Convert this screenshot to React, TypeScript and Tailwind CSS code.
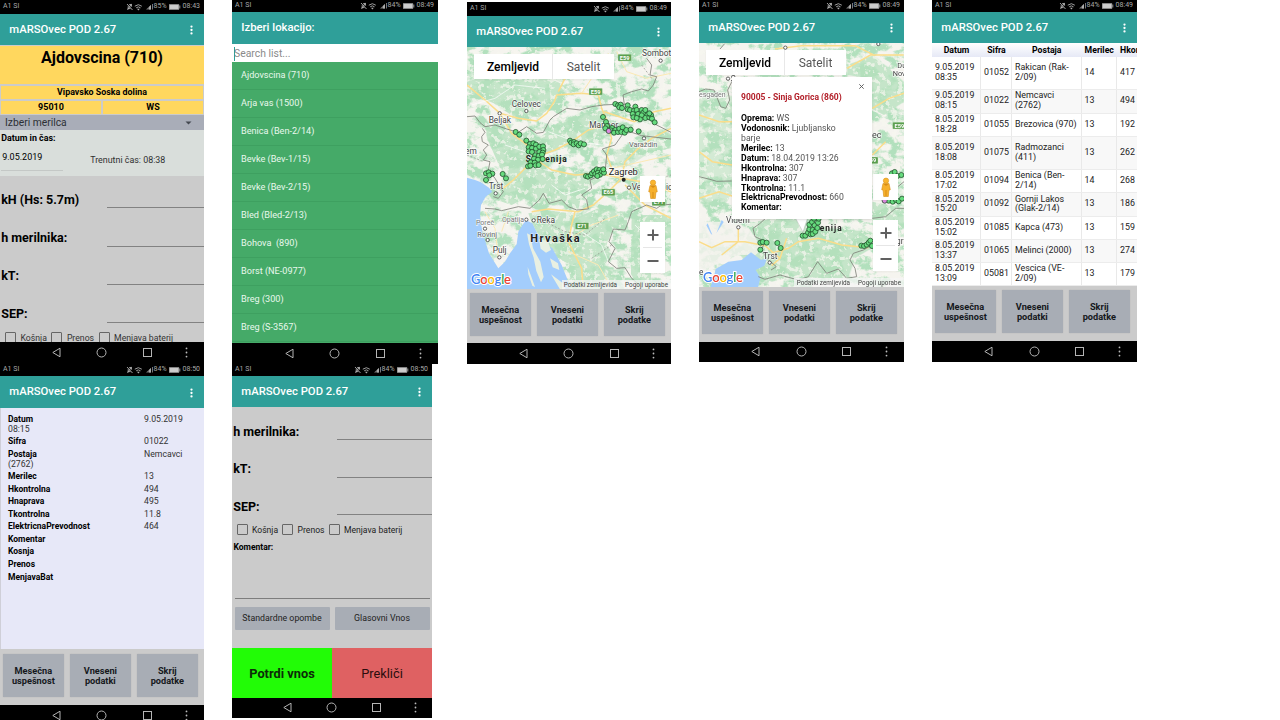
import React from 'react';

type Pt = [number, number];

/* ---------- system chrome ---------- */

function StatusBar({ time, battery, className }: { time: string; battery: string; className: string }) {
  return (
    <div className={`flex shrink-0 items-center bg-black pr-[4px] pb-px pl-[3px] text-[7px] leading-none whitespace-nowrap text-[#a9a9a9] ${className}`}>
      <span>A1 SI</span>
      <svg className="ml-auto h-[8px] w-[17px]" viewBox="0 0 17 8" fill="none" stroke="#b0b0b0" strokeWidth="0.9">
        <path d="M1 1l5.5 6M1.5 5.6h3M2.2 5.4V3.2M3 1.8l2.4-.5.2 2.4M5.5 1l-4 6" />
        <path d="M8.8 3.2q3.6-3 7 0M10.2 4.8q2.2-1.8 4.3 0" />
        <path d="M11 5.8h2.8L12.4 7.4z" fill="#b0b0b0" stroke="none" />
      </svg>
      <svg className="ml-[3.5px] h-[7px] w-[7px]" viewBox="0 0 7 7">
        <path d="M0 6.5L5 2v4.5z" fill="#777" />
        <path d="M3 6.5V4l2-2v4.500zM6 1h.7v5.500H6z" fill="#aaa" />
      </svg>
      <span className="ml-[0.5px]">{battery}</span>
      <svg className="ml-[2px] h-[6px] w-[12px]" viewBox="0 0 12 6">
        <rect x="0.4" y="0.7" width="9.4" height="4.600" fill="#ccc" stroke="#aaa" strokeWidth="0.7" />
        <path d="M10.800 1.500v3" stroke="#aaa" strokeWidth="0.9" />
      </svg>
      <span className="ml-[2px]">{time}</span>
    </div>
  );
}

function Header({ title = 'mARSOvec POD 2.67', menu = true, className = 'h-[31px]' }: { title?: string; menu?: boolean; className?: string }) {
  return (
    <div className={`flex shrink-0 items-center justify-between bg-[#2f9f99] pt-px pr-[11px] pl-[9.3px] text-[11.3px] font-medium whitespace-nowrap text-white ${className}`}>
      <span>{title}</span>
      {menu && (
        <svg className="h-[10px] w-[3px]" viewBox="0 0 3 10" fill="#fff">
          <circle cx="1.5" cy="1.6" r="1.150" />
          <circle cx="1.5" cy="5" r="1.150" />
          <circle cx="1.5" cy="8.400" r="1.150" />
        </svg>
      )}
    </div>
  );
}

function NavBar({ className = 'h-[21px]' }: { className?: string }) {
  return (
    <div className={`grid shrink-0 grid-cols-[34fr_45fr_45.5fr_45fr_34.5fr] place-items-center bg-black pb-px ${className}`}>
      <span />
      <svg className="h-[11px] w-[11px]" viewBox="0 0 11 11" fill="none" stroke="#b5b5b5" strokeWidth="1">
        <path d="M9 1.200v8.600L1.800 5.500z" strokeLinejoin="round" />
      </svg>
      <svg className="h-[11px] w-[11px]" viewBox="0 0 11 11" fill="none" stroke="#b5b5b5" strokeWidth="1">
        <circle cx="5.500" cy="5.500" r="4.500" />
      </svg>
      <svg className="h-[11px] w-[11px]" viewBox="0 0 11 11" fill="none" stroke="#b5b5b5" strokeWidth="1">
        <rect x="1.500" y="1.500" width="8" height="8" />
      </svg>
      <svg className="h-[11px] w-[3px]" viewBox="0 0 3 11" fill="#bbb">
        <circle cx="1.5" cy="1.400" r="0.900" />
        <circle cx="1.5" cy="5.500" r="0.900" />
        <circle cx="1.5" cy="9.600" r="0.900" />
      </svg>
    </div>
  );
}

function BottomButtons({ className }: { className: string }) {
  const cell = 'flex h-[43px] w-[61.500px] items-center justify-center rounded-[1px] bg-[#a8adb5] pt-px text-center shadow-[0_0_1px_#999]';
  return (
    <div className={`flex shrink-0 gap-[5.500px] bg-[#cbcbcb] pl-[2.600px] text-[9.200px] leading-[10.500px] font-bold text-[#15181c] ${className}`}>
      <div className={cell}>Mesečna<br />uspešnost</div>
      <div className={cell}>Vneseni<br />podatki</div>
      <div className={cell}>Skrij<br />podatke</div>
    </div>
  );
}

function Check({ label, className = '' }: { label: string; className?: string }) {
  return (
    <span className={`flex items-center gap-[4.500px] ${className}`}>
      <span className="h-[11px] w-[11px] rounded-[1px] border border-[#666]" />
      <span className="pt-px">{label}</span>
    </span>
  );
}

function Field({ label, className }: { label: string; className: string }) {
  return (
    <div className={`flex shrink-0 items-end justify-between pl-[1.200px] text-[12.500px] leading-[15px] font-bold ${className}`}>
      <span className="mb-[1.500px]">{label}</span>
      <span className="h-px w-[97px] bg-[#828282]" />
    </div>
  );
}

/* ---------- maps ---------- */

function Terrain({ id, x, y, w, h, seed }: { id: string; x: number; y: number; w: number; h: number; seed: number }) {
  return (
    <>
      <defs>
        <filter id={id} x="0" y="0" width="100%" height="100%" colorInterpolationFilters="sRGB">
          <feTurbulence type="fractalNoise" baseFrequency="0.022 0.03" numOctaves={5} seed={seed} />
          <feColorMatrix values="0 0 0 0 0.7  0 0 0 0 0.88  0 0 0 0 0.74  6 0 0 0 -2.7" />
        </filter>
        <filter id={`${id}g`} x="0" y="0" width="100%" height="100%" colorInterpolationFilters="sRGB">
          <feTurbulence type="fractalNoise" baseFrequency="0.06" numOctaves={4} seed={seed + 4} />
          <feColorMatrix values="0 0 0 0 0.97  0 0 0 0 0.97  0 0 0 0 0.94  0 9 0 0 -5" />
        </filter>
      </defs>
      <rect x={x} y={y} width={w} height={h} fill="#f5f4ef" />
      <rect x={x} y={y} width={w} height={h} filter={`url(#${id})`} />
    </>
  );
}

function Clearings({ id, x, y, w, h }: { id: string; x: number; y: number; w: number; h: number }) {
  return <rect x={x} y={y} width={w} height={h} filter={`url(#${id}g)`} opacity="0.7" />;
}

function Dots({ pts, fill = '#66db7e' }: { pts: Pt[]; fill?: string }) {
  return (
    <g fill={fill} stroke="#1f4a29" strokeWidth="2.300">
      {pts.map(([x, y], i) => (
        <circle key={i} cx={x} cy={y} r="7.600" />
      ))}
    </g>
  );
}

function Shield({ x, y, t }: { x: number; y: number; t: string }) {
  return (
    <g>
      <rect x={x - 20} y={y - 10} width="40" height="20" rx="2" fill="#5a9e4e" stroke="#d5ecd1" strokeWidth="1" />
      <text x={x} y={y + 6} fontSize="17" fontWeight="700" fill="#fff" textAnchor="middle">{t}</text>
    </g>
  );
}

function Place({ x, y, t, cx, cy, size = 25, fill = '#444' }: { x: number; y: number; t: string; cx?: number; cy?: number; size?: number; fill?: string }) {
  return (
    <g>
      {cx !== undefined && <circle cx={cx} cy={cy} r="5" fill="#fff" stroke="#444" strokeWidth="2.500" />}
      <text x={x} y={y} fontSize={size} fill={fill} stroke="#fff" strokeWidth="4" paintOrder="stroke" strokeOpacity="0.8">{t}</text>
    </g>
  );
}

function MapFooter({ y, right }: { y: number; right: number }) {
  return (
    <g>
      <rect x="306" y={y - 27} width={right - 306} height="27" fill="#f5f5f5" opacity="0.75" />
      <text x={right - 322} y={y - 7} fontSize="19" fill="#444" textLength="160">Podatki zemljevida</text>
      <text x={right - 138} y={y - 7} fontSize="19" fill="#444" textLength="129">Pogoji uporabe</text>
      <text x="33" y={y - 14} fontSize="39" fontWeight="600" fontFamily="Lato, sans-serif" stroke="#fff" strokeWidth="6" paintOrder="stroke" textLength="120">
        <tspan fill="#4285f4">G</tspan><tspan fill="#ea4335">o</tspan><tspan fill="#fbbc05">o</tspan><tspan fill="#4285f4">g</tspan><tspan fill="#34a853">l</tspan><tspan fill="#ea4335">e</tspan>
      </text>
    </g>
  );
}

function MapControls({ top, tabTop }: { top: string; tabTop: string }) {
  return (
    <>
      <div className={`absolute left-[7px] flex h-[25px] w-[140px] bg-white text-[12px] shadow-xs ${tabTop}`}>
        <span className="flex w-[79px] items-center justify-center border-r border-[#e8e8e8] font-medium text-black">Zemljevid</span>
        <span className="flex flex-1 items-center justify-center text-[#565656]">Satelit</span>
      </div>
      <div className={`absolute right-[6px] flex w-[25px] flex-col ${top}`}>
        <div className="flex h-[26px] items-center justify-center bg-white shadow-xs">
          <svg className="h-[21px] w-[14px]" viewBox="0 0 14 21">
            <path d="M4 6.500h6l1.300 6.200-1.400.5-.6 6.300H4.700l-.6-6.300-1.400-.5z" fill="#f6b02c" stroke="#d58d14" strokeWidth="0.600" />
            <path d="M7 13v6" stroke="#c77f10" strokeWidth="0.700" />
            <circle cx="7" cy="3.700" r="2.700" fill="#f9b52f" stroke="#d58d14" strokeWidth="0.500" />
            <path d="M4.500 7h5L7 9z" fill="#d98c14" />
          </svg>
        </div>
        <div className="mt-[20px] flex h-[51px] flex-col bg-white shadow-xs">
          <span className="flex flex-1 items-center justify-center">
            <svg className="h-[12px] w-[12px]" viewBox="0 0 12 12" stroke="#606060" strokeWidth="2"><path d="M0.500 6h11M6 0.500v11" /></svg>
          </span>
          <span className="mx-[3px] h-px bg-[#e6e6e6]" />
          <span className="flex flex-1 items-center justify-center">
            <svg className="h-[12px] w-[12px]" viewBox="0 0 12 12" stroke="#606060" strokeWidth="2"><path d="M0.500 6h11" /></svg>
          </span>
        </div>
      </div>
    </>
  );
}

const eastDots: Pt[] = [
  [466, 312], [474, 316], [482, 314], [478, 322], [486, 324], [503, 316], [503, 328], [510, 330], [526, 320], [522, 332], [530, 330], [518, 342], [534, 342], [520, 352],
  [545, 330], [550, 338], [545, 346], [556, 330], [562, 345], [556, 354], [568, 352], [573, 345], [576, 356], [540, 358], [530, 354], [584, 367], [568, 340],
  [429, 351], [438, 366], [441, 378], [436, 385], [456, 384], [452, 391], [466, 390], [462, 398], [474, 396], [478, 386], [488, 382], [484, 396], [494, 398], [499, 390], [512, 389], [536, 394],
];
const midDots: Pt[] = [
  [167, 396], [178, 404], [199, 422], [330, 422], [334, 428], [342, 426], [341, 433], [350, 430], [356, 436], [362, 430], [372, 433],
  [210, 432], [220, 430], [228, 434], [206, 442], [216, 444], [228, 446], [238, 440], [249, 439], [250, 450], [206, 454], [216, 456], [238, 456], [248, 458],
  [226, 466], [236, 468], [246, 464], [222, 476], [234, 479], [248, 477], [212, 487], [224, 488], [204, 499], [211, 497], [227, 496], [236, 495],
];
const southDots: Pt[] = [
  [78, 520], [86, 517], [97, 521], [88, 526], [78, 540], [128, 522], [138, 535],
  [378, 528], [384, 530], [392, 526], [396, 520], [402, 514], [410, 508], [418, 510], [406, 522], [414, 518], [420, 524], [426, 514], [432, 518], [430, 508], [412, 528],
];

function BigMap() {
  return (
    <svg className="h-full w-full" viewBox="21 141 612 726" preserveAspectRatio="none" fontFamily="Roboto, sans-serif">
      <Terrain id="terrA" x={21} y={141} w={612} h={726} seed={11} />
      <g transform="translate(15 135)">
        <g fill="#b5e1bd" opacity="0.75">
          <path d="M6 110l60-20 90 15 90-10 60 30-30 40-50 50-80 0-60-40-80-35z" />
          <path d="M6 225l60 20 60 10 60 10 30 20 60-50 70-30 80-10 20 50-50 30-70 25-90 30-60 60-70-20-40-90-6-40z" />
          <path d="M110 355l80 10 90 20 90 0 40 20-60 40-10 50-60-20-50 10-40-30-50 25-60-20 30-50z" />
          <path d="M190 505l70-8 70 10-20 60 30 40 40 60 10 66h-60l-30-80-60-50-40-70z" />
          <path d="M330 520l70-30 80 10 10 50-50 10-15 40 15 20-20 40 30 30-10 48h-70l-20-80-30-60z" />
          <path d="M500 510l118 0v90l-60 0v138h-30l-30-50 0-80z" />
          <path d="M440 320l50-20 40-40 80-10 8 60-60 10-60 40-40 10z" opacity="0.6" />
        </g>
      </g>
      <Clearings id="terrA" x={21} y={141} w={612} h={726} />
      <g transform="translate(15 135)">
        <path d="M6 398L30 405 48 412 72 428 82 440 62 455 48 480 45 510 52 560 72 625 100 670 120 650 135 625 155 598 160 560 182 525 202 535 215 562 232 590 262 610 290 660 306 700 315 738H6z" fill="#a3cdfc" />
        <path d="M186 565l10 5 8 40 22 40 10 46-8 16-14-34-8-40-14-40zM222 582l26 6 10 27-15 8-16-12zM255 640l24 15 4 20-20-8zM188 666l10 26 12 34-8-4-12-34zM258 688l36 27 10 23h-16z" fill="#e9f0e2" />
        <g fill="none" stroke="#fbdd8b" strokeWidth="4.500" strokeLinejoin="round">
          <path d="M6 120l54 45 45 40 55 15 55 8 30-23 23-35 7-20 75-5 50 5 10 40 15 35-5 15-50 15-50 35-50 25-55 20-25 25-45 45-30 25" />
          <path d="M105 205l35 60 60 45 15 35 45 30 70 15 70-5 70 15" />
          <path d="M425 240l15 40-15 50 15 40 30 30-40 40-45 40-45 20-90-8-50 8" />
          <path d="M470 400l60 10 88 30M470 400l10-50 40-40 40-30 58-30M330 500l-10 40-10 50 15 30 25 50 5 68" />
          <path d="M280 140l30-60 40-20 70-20M418 200l90 30 60-30 50-10M480 420l60 60 78 40" />
        </g>
        <g fill="none" stroke="#fce9b4" strokeWidth="3">
          <path d="M350 145l40-60 40-60M455 20l30 60 60 20 73-15M440 370l90-20 88-20M300 590l80-50 80-30M310 620l90 40 40 70M60 500l30 50 10 90M130 500l-20 60" />
        </g>
        <g fill="none" stroke="#fff" strokeWidth="2.500" opacity="0.8">
          <path d="M20 180l70-20 60-40 90 10M120 300l60 20M250 260l80 30 80 10M260 420l40 30 60-20M350 560l60 40 20 50M510 540l50 50" />
        </g>
        <g fill="none" stroke="#7b7c75" strokeWidth="2.400" strokeLinejoin="round">
          <path d="M6 215l24-2 15 20 15 12 30-5 35 12 35 10 25-17 30 20 20-3 20-37 10-10 40-25 40 5 35-10 35-5 35-2 28 0 22 17 40 20 35 25 43 22" />
          <path d="M478 178l-4-28 26-10 30-8 20 6 15-18 10-25-20-5 5-30-15-20" />
          <path d="M52 250l8 12-10 13 2 15 18 10-15 15 10 15-10 15 20 5-5 25 20 25 15 25 10 15-15 20-15-5" />
          <path d="M60 490l30 2 20 5 50-12 35 5 28-25 12-20 17 30 38-10 20 20 25 10 35-3-5-27-15-15 30-20-5-25 45-20 5-55-13-18 38-12 25-35 25-3 30 10 88 10" />
          <path d="M618 478l-28 2-15 10-30-10-45 20-10 30-10 25-35-3-13 38 18 20-20 40 25 20 25-2 20 32 35 30" />
        </g>
        <g fill="none" stroke="#8c8d88" strokeWidth="2" strokeDasharray="6 5">
          <path d="M6 330l50 20M240 530l60 30 60 10 60-50M380 640l60-40M530 60l30 40M520 420l98-30" />
        </g>
      </g>
      <Shield x={494} y={173} t="E59" />
      <Shield x={407} y={275} t="E59" />
      <Shield x={445} y={577} t="E65" />
      <Shield x={366} y={678} t="E71" />
      <Shield x={596} y={607} t="E71" />
      <Place x={546} y={168} t="Sombot" cx={602} cy={182} />
      <Place x={155} y={321} t="Celovec" cx={199} cy={333} />
      <Place x={86} y={368} t="Beljak" cx={119} cy={340} />
      <Place x={388} y={383} t="Maribor" />
      <Place x={507} y={441} t="Varaždin" cx={552} cy={415} size={22} fill="#666" />
      <Place x={15} y={462} t="em" />
      <Place x={446} y={524} t="Zagreb" size={28} fill="#222" />
      <circle cx="491" cy="539" r="6" fill="#222" />
      <Place x={86} y={568} t="Trst" cx={107} cy={580} />
      <Place x={515} y={569} t="Ve" cx={507} cy={563} />
      <Place x={618} y={569} t="ic" />
      <Place x={48} y={676} t="Poreč" cx={75} cy={686} size={21} fill="#777" />
      <Place x={126} y={666} t="Opatija" cx={199} cy={659} size={21} fill="#777" />
      <Place x={230} y={669} t="Reka" cx={221} cy={661} />
      <Place x={52} y={710} t="Rovinj" cx={83} cy={720} size={22} fill="#666" />
      <Place x={98} y={760} t="Pulj" cx={118} cy={772} />
      <text x="211" y="727" fontSize="33" fontWeight="700" fill="#222" textLength="148" stroke="#fff" strokeWidth="3" strokeOpacity="0.7" paintOrder="stroke">Hrvaška</text>
      <text x="197" y="487" fontSize="25" fontWeight="700" fill="#222" textLength="123">Slovenija</text>
      <Dots pts={eastDots} />
      <Dots pts={midDots} />
      <Dots pts={southDots} />
      <Dots pts={[[446, 393]]} fill="#dd8ae0" />
      <MapFooter y={867} right={633} />
    </svg>
  );
}

function SmallMap() {
  return (
    <svg className="h-full w-full" viewBox="21 129 615 732" preserveAspectRatio="none" fontFamily="Roboto, sans-serif">
      <Terrain id="terrB" x={21} y={129} w={615} h={732} seed={23} />
      <g transform="translate(-681 135)" fill="#b5e1bd" opacity="0.75">
        <path d="M702 160l60-20 60 20v250l-60 100-60-40z" opacity="0.7" />
        <path d="M870 530l60-10 80 0 80 30 130 10v50l-50 30-20 60-90 0-60-10-80 20-60-30-40-60z" />
        <path d="M1146 60l80-30 91 80v60l-60 40-40-20v-90l-71-10z" />
        <path d="M1222 470l95 20v60l-95-20z" />
      </g>
      <Clearings id="terrB" x={21} y={129} w={615} h={732} />
      <g transform="translate(-681 135)">
        <path d="M702 530h90l60 20 20 30 20 30-20 20-60 0-60 30-50 20z" fill="#f4f2ee" opacity="0.8" />
        <path d="M735 732L748 690 752 672 790 650 830 645 858 622 888 645 906 640 898 662 872 675 886 698 878 732z" fill="#a3cdfc" />
        <path d="M728 535l14 34-4-2-14-26zM770 525l-16 40 22-34z" fill="#a3cdfc" />
        <g fill="none" stroke="#fbdd8b" strokeWidth="4.500">
          <path d="M702 590l38 18 40-18 60 0 60 12 45 38-25 22M945 640l20-60M920 625l50-15 30-20 60-10 70 20 80 8M820 550l0 40-50 40" />
          <path d="M702 210l60 20 60 0M702 320l40 30 60 10M702 460l60-20 60 20M1222 190l50-30 45-15M1146 70l70-40 100 0M930 12l80-10 160 0 60 30M1222 330l40-40" />
        </g>
        <g fill="none" stroke="#7b7c75" strokeWidth="2.400">
          <path d="M702 140l20-8 25 3 20 50 15 5 12-25-6-30 20-40M702 395l33 8 20 6 45-1" />
          <path d="M870 575l-6-25 20-14 22-20M870 575l30 14-10 24 14 26 30 26-16 10M880 695l20 8 45-13 55 15 30-10 28-45 27 35 35-13 25 28 30-5-5-25-15-25 10-20 30-10 35-20M1222 520l40-5 30-25 25 0M1280 440l37-30" />
          <path d="M765 12l14-16" />
        </g>
      </g>
      <Shield x={622} y={377} t="E59" />
      <Shield x={538} y={481} t="E59" />
      <circle cx="280" cy="143" r="5" fill="#fff" stroke="#444" strokeWidth="2.500" />
      <circle cx="559" cy="132" r="5" fill="#fff" stroke="#444" strokeWidth="2.500" />
      <Place x={616} y={204} t="Du" size={22} />
      <Place x={602} y={228} t="Nov" size={22} />
      <Place x={116} y={245} t="S" cx={108} cy={236} />
      <Place x={21} y={290} t="esgaden" size={21} fill="#777" />
      <Place x={540} y={413} t="ec" size={27} />
      <Place x={102} y={670} t="Videm" cx={139} cy={682} />
      <Place x={213} y={776} t="Trst" cx={233} cy={788} />
      <Place x={612} y={731} t="gr" />
      <Place x={21} y={826} t="e" />
      <text x="383" y="694" fontSize="25" fontWeight="700" fill="#222" textLength="66">enija</text>
      <path d="M308 650h40l-15 46z" fill="#fff" stroke="#999" strokeWidth="1" />
      <Dots pts={[[205, 728], [212, 726], [224, 728], [205, 749], [256, 729], [266, 744], [508, 737], [516, 738], [524, 734], [530, 728], [535, 722], [540, 738], [332, 707], [340, 707], [348, 698], [356, 703], [352, 688], [362, 690], [362, 702], [370, 695], [352, 674], [360, 666], [368, 676], [378, 668], [376, 684], [380, 656], [366, 656], [600, 520], [608, 516], [616, 528], [628, 525], [590, 602], [602, 605], [612, 600], [620, 604], [630, 596]]} />
      <Dots pts={[[578, 602]]} fill="#dd8ae0" />
      <MapFooter y={861} right={636} />
    </svg>
  );
}

/* ---------- data ---------- */

const popup: [string, string][] = [
  ['Oprema:', 'WS'], ['Vodonosnik:', 'Ljubljansko barje'], ['Merilec:', '13'], ['Datum:', '18.04.2019 13:26'], ['Hkontrolna:', '307'],
  ['Hnaprava:', '307'], ['Tkontrolna:', '11.1'], ['ElektricnaPrevodnost:', '660'], ['Komentar:', ''],
];

const locations = ['Ajdovscina (710)', 'Arja vas (1500)', 'Benica (Ben-2/14)', 'Bevke (Bev-1/15)', 'Bevke (Bev-2/15)', 'Bled (Bled-2/13)', 'Bohova  (890)', 'Borst (NE-0977)', 'Breg (300)', 'Breg (S-3567)'];

const tableRows: { h: string; c: string[] }[] = [
  { h: 'h-[33px]', c: ['9.05.2019 08:35', '01052', 'Rakican (Rak-2/09)', '14', '417'] },
  { h: 'h-[23.500px] bg-[#f8f8f8]', c: ['9.05.2019 08:15', '01022', 'Nemcavci (2762)', '13', '494'] },
  { h: 'h-[23.500px]', c: ['8.05.2019 18:28', '01055', 'Brezovica (970)', '13', '192'] },
  { h: 'h-[33px] bg-[#f8f8f8]', c: ['8.05.2019 18:08', '01075', 'Radmozanci (411)', '13', '262'] },
  { h: 'h-[23.300px]', c: ['8.05.2019 17:02', '01094', 'Benica (Ben-2/14)', '14', '268'] },
  { h: 'h-[23.300px] bg-[#f8f8f8]', c: ['8.05.2019 15:20', '01092', 'Gornji Lakos (Glak-2/14)', '13', '186'] },
  { h: 'h-[23.300px]', c: ['8.05.2019 15:02', '01085', 'Kapca (473)', '13', '159'] },
  { h: 'h-[23.300px] bg-[#f8f8f8]', c: ['8.05.2019 13:37', '01065', 'Melinci (2000)', '13', '274'] },
  { h: 'h-[23.300px]', c: ['8.05.2019 13:09', '05081', 'Vescica (VE-2/09)', '13', '179'] },
];

const details: string[][] = [
  ['Datum', '9.05.2019', '08:15'], ['Sifra', '01022'], ['Postaja', 'Nemcavci', '(2762)'], ['Merilec', '13'], ['Hkontrolna', '494'], ['Hnaprava', '495'],
  ['Tkontrolna', '11.8'], ['ElektricnaPrevodnost', '464'], ['Komentar', ''], ['Kosnja', ''], ['Prenos', ''], ['MenjavaBat', ''],
];

/* ---------- screens ---------- */

function EntryScreen() {
  return (
    <div className="flex h-[364px] w-[204px] flex-col overflow-hidden bg-[#cbcbcb] text-black">
      <StatusBar time="08:43" battery="85%" className="h-[14px]" />
      <Header />
      <div className="mt-px h-[38px] shrink-0 bg-[#ffd75e] text-center text-[16px] leading-[23px] font-bold">Ajdovscina (710)</div>
      <div className="mx-px mt-[1.500px] flex h-[13px] shrink-0 items-center justify-center bg-[#ffd75e] pt-px text-[8.900px] font-bold">Vipavsko Soska dolina</div>
      <div className="mx-px mt-[2px] flex h-[13px] shrink-0 gap-[2px] text-[9px] font-bold">
        <span className="flex flex-1 items-center justify-center bg-[#ffd75e] pt-px">95010</span>
        <span className="flex flex-1 items-center justify-center bg-[#ffd75e] pt-px">WS</span>
      </div>
      <div className="mt-[1.500px] flex h-[15px] shrink-0 items-center justify-between bg-[#a9adb8] pr-[12px] pl-[5px] text-[10.300px] text-[#2d3035]">
        <span>Izberi merilca</span>
        <svg className="h-[4px] w-[7px]" viewBox="0 0 7 4"><path d="M0.500 0.500h6l-3 3z" fill="#454951" /></svg>
      </div>
      <div className="h-[46px] shrink-0 bg-[#d9dedb] pt-[2.500px] pl-[1.200px]">
        <div className="text-[8.900px] leading-[11px] font-bold">Datum in čas:</div>
        <div className="flex items-start">
          <div className="mt-[6px] h-[21px] w-[62px] border-b border-[#c4c8c6] pl-px text-[9px] leading-[15px]">9.05.2019</div>
          <div className="mt-[9px] ml-[27px] text-[8.900px] leading-[15px] text-[#303030]">Trenutni čas: 08:38</div>
        </div>
      </div>
      <Field label="kH (Hs: 5.7m)" className="h-[32px]" />
      <Field label="h merilnika:" className="h-[38.500px]" />
      <Field label="kT:" className="h-[38.300px]" />
      <Field label="SEP:" className="h-[38.200px]" />
      <div className="flex h-[20px] items-start overflow-hidden pt-[9px] pl-[5px] text-[8.700px] leading-[11px] text-[#333]">
        <Check label="Košnja" />
        <Check label="Prenos" className="ml-[4.500px]" />
        <Check label="Menjava baterij" className="ml-[4.500px]" />
      </div>
      <NavBar className="h-[22px]" />
    </div>
  );
}

function LocationScreen() {
  return (
    <div className="flex h-[364px] w-[206px] flex-col overflow-hidden bg-[#45aa68]">
      <StatusBar time="08:49" battery="84%" className="h-[12px]" />
      <Header title="Izberi lokacijo:" menu={false} className="h-[32px]" />
      <div className="flex h-[18px] shrink-0 items-center bg-white pt-px pl-[2px] text-[10.400px] text-[#8a8a8a]">
        <span className="h-[14px] w-px bg-[#2f9f99]" />
        <span className="-ml-px">Search list...</span>
      </div>
      <div className="flex flex-1 flex-col">
        {locations.map((l) => (
          <div key={l} className="flex h-[28px] shrink-0 items-center border-b border-[#3ea060] pl-[9px] text-[9.150px] whitespace-pre text-[#e9f8ed]">{l}</div>
        ))}
      </div>
      <NavBar />
    </div>
  );
}

function MapScreen() {
  return (
    <div className="flex h-[364px] w-[204px] flex-col overflow-hidden bg-white pt-[2px]">
      <StatusBar time="08:49" battery="84%" className="h-[14px]" />
      <Header />
      <div className="relative h-[242px] shrink-0 overflow-hidden">
        <BigMap />
        <MapControls tabTop="top-[7px]" top="top-[129px]" />
      </div>
      <BottomButtons className="h-[54px] pt-[4px]" />
      <NavBar />
    </div>
  );
}

function PopupScreen() {
  return (
    <div className="flex h-[362px] w-[205px] flex-col overflow-hidden bg-white">
      <StatusBar time="08:49" battery="84%" className="h-[12px]" />
      <Header />
      <div className="relative h-[244px] shrink-0 overflow-hidden">
        <SmallMap />
        <MapControls tabTop="top-[7px]" top="top-[131px]" />
        <div className="absolute top-[34px] left-[33px] h-[142px] w-[140px] bg-white pt-[16px] pl-[9px] text-[8.700px] leading-[9.870px] text-[#555] shadow">
          <svg className="absolute top-[7px] right-[8.500px] h-[5px] w-[5px]" viewBox="0 0 5 5" stroke="#555" strokeWidth="0.900"><path d="M0.300 0.300l4.400 4.400M4.700 0.300L0.300 4.700" /></svg>
          <div className="mb-[11.500px] text-[8.500px] font-bold whitespace-nowrap text-[#b3212b]">90005 - Sinja Gorica (860)</div>
          {popup.map(([k, v]) => (
            <div key={k} className="w-[110px]"><b className="text-black">{k}</b> {v}</div>
          ))}
        </div>
      </div>
      <BottomButtons className="h-[55px] pt-[4px]" />
      <NavBar className="h-[20px]" />
    </div>
  );
}

function TableScreen() {
  const cols = 'grid w-[236px] shrink-0 grid-cols-[49px_31px_69.500px_35.500px_51px]';
  const cell = 'flex items-center border-r border-[#e9e9e9] pl-[3px]';
  return (
    <div className="flex h-[362px] w-[205px] flex-col overflow-hidden bg-white text-[8.850px] text-[#222]">
      <StatusBar time="08:49" battery="84%" className="h-[12px]" />
      <Header />
      <div className="flex h-[243px] shrink-0 flex-col overflow-hidden">
        <div className={`${cols} h-[14px] bg-linear-to-b from-white to-[#e6e9f6] text-center text-[8.700px] leading-[14px] font-bold text-black`}>
          <span>Datum</span><span>Sifra</span><span>Postaja</span><span>Merilec</span><span className="pl-[3px] text-left">Hkontrolna</span>
        </div>
        {tableRows.map((r) => (
          <div key={r.c[1]} className={`${cols} border-b border-[#ececec] leading-[9.900px] ${r.h}`}>
            {r.c.map((c, i) => (
              <span key={i} className={cell}>{c}</span>
            ))}
          </div>
        ))}
      </div>
      <BottomButtons className="h-[55px] pt-[4px]" />
      <NavBar />
    </div>
  );
}

function DetailScreen() {
  return (
    <div className="flex h-[356px] w-[204px] flex-col overflow-hidden bg-[#cbcbcb]">
      <StatusBar time="08:50" battery="84%" className="h-[12px]" />
      <Header className="h-[32px]" />
      <div className="flex h-[241px] shrink-0 flex-col gap-[2.550px] border-l border-[#cfcfd8] bg-[#e7e8f8] pt-[5.500px] pl-[7px] text-[8.700px] leading-[10px] text-[#333]">
        {details.map(([k, v, extra]) => (
          <div key={k}>
            <div className="flex"><b className="w-[136px] text-[8.500px] text-black">{k}</b><span>{v}</span></div>
            {extra && <div>{extra}</div>}
          </div>
        ))}
      </div>
      <BottomButtons className="h-[56px] pt-[5px]" />
      <NavBar />
    </div>
  );
}

function CommentScreen() {
  return (
    <div className="flex h-[354px] w-[200px] flex-col overflow-hidden bg-[#cbcbcb] text-black">
      <StatusBar time="08:50" battery="84%" className="h-[12px]" />
      <Header />
      <Field label="h merilnika:" className="h-[33px] [&>span:last-child]:w-[95px]" />
      <Field label="kT:" className="h-[37.500px] [&>span:last-child]:w-[95px]" />
      <Field label="SEP:" className="h-[37.500px] [&>span:last-child]:w-[95px]" />
      <div className="flex h-[29.500px] shrink-0 items-center pl-[4.500px] text-[8.600px] text-[#222]">
        <Check label="Košnja" />
        <Check label="Prenos" className="ml-[4px]" />
        <Check label="Menjava baterij" className="ml-[4px]" />
      </div>
      <div className="mx-[2.500px] h-[54px] shrink-0 border-b border-[#7d7d7d] text-[8.500px] leading-[5px] font-bold"><span className="-ml-px">Komentar:</span></div>
      <div className="mt-[8px] flex h-[23px] shrink-0 gap-[5px] px-[2.500px] text-[8.800px] text-[#222]">
        <span className="flex flex-1 items-center justify-center rounded-[1px] bg-[#a8adb5] pt-px">Standardne opombe</span>
        <span className="flex flex-1 items-center justify-center rounded-[1px] bg-[#a8adb5] pt-px">Glasovni Vnos</span>
      </div>
      <div className="mt-auto flex h-[50px] shrink-0 text-[12.800px]">
        <span className="flex flex-1 items-center justify-center bg-[#22fc06] pt-[2px] font-bold text-[#0c2b08]">Potrdi vnos</span>
        <span className="flex flex-1 items-center justify-center bg-[#df6162] pt-[2px] text-[#2b0d0d]">Prekliči</span>
      </div>
      <NavBar className="h-[20px]" />
    </div>
  );
}

export default function App() {
  return (
    <div className="h-[720px] w-[1280px] overflow-hidden bg-white font-['Roboto',sans-serif]">
      <div className="flex h-[364px] items-start">
        <EntryScreen />
        <div className="ml-[28px]"><LocationScreen /></div>
        <div className="ml-[29px]"><MapScreen /></div>
        <div className="ml-[28px]"><PopupScreen /></div>
        <div className="ml-[28px]"><TableScreen /></div>
      </div>
      <div className="flex items-start gap-[28px]">
        <DetailScreen />
        <CommentScreen />
      </div>
    </div>
  );
}
